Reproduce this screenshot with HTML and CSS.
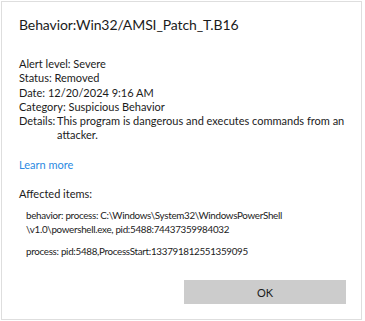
FILE: index.html
```html
<!DOCTYPE html>
<html lang="en">
<head>
    <meta charset="UTF-8">
    <meta name="viewport" content="width=device-width, initial-scale=1.0">
    <title>Threat details</title>
    <link rel="stylesheet" href="styles.css">
</head>
<body>
    <div class="dialog">
        <h1 class="threat-name">Behavior:Win32/AMSI_Patch_T.B16</h1>

        <div class="details">
            <div class="row">Alert level: Severe</div>
            <div class="row">Status: Removed</div>
            <div class="row">Date: 12/20/2024 9:16 AM</div>
            <div class="row">Category: Suspicious Behavior</div>
            <div class="row detail-row">
                <span class="label">Details:</span>
                <span class="value">This program is dangerous and executes commands from an attacker.</span>
            </div>
        </div>

        <a class="learn-more" href="#">Learn more</a>

        <div class="affected">
            <div class="affected-title">Affected items:</div>
            <div class="item">behavior: process: C:\Windows\System32\WindowsPowerShell<br>\v1.0\powershell.exe, pid:5488:74437359984032</div>
            <div class="item">process: pid:5488,ProcessStart:133791812551359095</div>
        </div>

        <div class="actions">
            <button class="ok-button">OK</button>
        </div>
    </div>
</body>
</html>
```

FILE: styles.css
```css
body {
    margin: 0;
    padding: 0;
    background-color: #ffffff;
    font-family: Lato, "Noto Sans", sans-serif;
    color: #1b1b1b;
}
.dialog {
    box-sizing: border-box;
    width: 361px;
    height: 319px;
    margin: 1px;
    border: 1px solid #dedede;
    padding: 13px 15px 15px 17px;
    display: flex;
    flex-direction: column;
}
.threat-name {
    margin: 0;
    font-size: 14px;
    font-weight: normal;
    letter-spacing: -0.1px;
    line-height: 20px;
}
.details {
    margin-top: 22px;
    font-size: 11px;
    line-height: 14.3px;
}
.detail-row {
    display: flex;
}
.label {
    flex: none;
    width: 38px;
}
.value {
    flex: 1;
}
.learn-more {
    margin-top: 15px;
    font-size: 11px;
    line-height: 14px;
    color: #2b8ae2;
    text-decoration: none;
    align-self: flex-start;
}
.affected {
    margin-top: 15px;
    font-size: 11px;
    line-height: 14px;
}
.item {
    margin-top: 7px;
    padding-left: 7px;
    font-size: 9.8px;
    letter-spacing: -0.3px;
}
.item + .item {
    margin-top: 8px;
}
.actions {
    margin-top: auto;
    display: flex;
    justify-content: flex-end;
}
.ok-button {
    width: 162px;
    height: 24px;
    border: none;
    background-color: #cccccc;
    font-family: inherit;
    font-size: 11px;
    color: #1b1b1b;
}
```
